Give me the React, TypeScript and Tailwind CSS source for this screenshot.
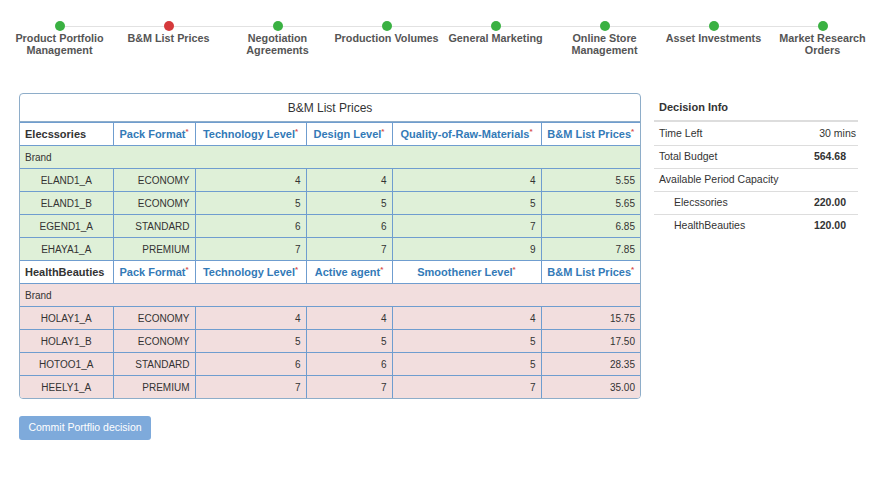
import React, { FC } from "react";

const steps = [
  { label: ["Product Portfolio", "Management"], active: false },
  { label: ["B&M List Prices"], active: true },
  { label: ["Negotiation", "Agreements"], active: false },
  { label: ["Production Volumes"], active: false },
  { label: ["General Marketing"], active: false },
  { label: ["Online Store", "Management"], active: false },
  { label: ["Asset Investments"], active: false },
  { label: ["Market Research", "Orders"], active: false },
];

type Row = { brand: string; pack: string; a: number; b: number; c: number; price: string };

const groups: { name: string; cols: string[]; tone: "green" | "red"; rows: Row[] }[] = [
  {
    name: "Elecssories",
    cols: ["Pack Format", "Technology Level", "Design Level", "Quality-of-Raw-Materials", "B&M List Prices"],
    tone: "green",
    rows: [
      { brand: "ELAND1_A", pack: "ECONOMY", a: 4, b: 4, c: 4, price: "5.55" },
      { brand: "ELAND1_B", pack: "ECONOMY", a: 5, b: 5, c: 5, price: "5.65" },
      { brand: "EGEND1_A", pack: "STANDARD", a: 6, b: 6, c: 7, price: "6.85" },
      { brand: "EHAYA1_A", pack: "PREMIUM", a: 7, b: 7, c: 9, price: "7.85" },
    ],
  },
  {
    name: "HealthBeauties",
    cols: ["Pack Format", "Technology Level", "Active agent", "Smoothener Level", "B&M List Prices"],
    tone: "red",
    rows: [
      { brand: "HOLAY1_A", pack: "ECONOMY", a: 4, b: 4, c: 4, price: "15.75" },
      { brand: "HOLAY1_B", pack: "ECONOMY", a: 5, b: 5, c: 5, price: "17.50" },
      { brand: "HOTOO1_A", pack: "STANDARD", a: 6, b: 6, c: 5, price: "28.35" },
      { brand: "HEELY1_A", pack: "PREMIUM", a: 7, b: 7, c: 7, price: "35.00" },
    ],
  },
];

const cell = "border border-[#6f9dcf] h-[23px] px-[5px] text-[10px] text-[#333]";

const Steps: FC = () => (
  <div className="flex px-[5px] pt-[21px]">
    {steps.map((s, i) => (
      <div key={i} className="w-[109px] flex flex-col items-center">
        <div className="flex items-center w-full">
          <div className={`flex-1 h-px ${i === 0 ? "" : "bg-[#e2e2e2]"}`} />
          <div className={`w-[10px] h-[10px] rounded-full ${s.active ? "bg-[#d5393b]" : "bg-[#3ab142]"}`} />
          <div className={`flex-1 h-px ${i === steps.length - 1 ? "" : "bg-[#e2e2e2]"}`} />
        </div>
        <div className="mt-[1px] text-center text-[10.8px] leading-[12px] font-bold text-[#555]">
          {s.label.map((l) => (
            <div key={l} className="whitespace-nowrap">{l}</div>
          ))}
        </div>
      </div>
    ))}
  </div>
);

const PriceTable: FC = () => (
  <div className="w-[622px] border border-[#8eadc9] rounded-[4px] overflow-hidden">
    <div className="h-[28px] flex items-center justify-center text-[12px] text-[#333] border-b border-[#8eadc9]">
      B&amp;M List Prices
    </div>
    <table className="w-full border-collapse table-fixed -mb-px">
      <colgroup>
        <col className="w-[93px]" />
        <col className="w-[82px]" />
        <col className="w-[111px]" />
        <col className="w-[86px]" />
        <col className="w-[149px]" />
        <col />
      </colgroup>
      <tbody>
        {groups.map((g) => {
          const bg = g.tone === "green" ? "bg-[#dff0d8]" : "bg-[#f2dede]";
          return (
            <React.Fragment key={g.name}>
              <tr className="bg-white">
                <th className={`${cell} border-l-0 text-left text-[11px] font-bold text-[#111]`}>{g.name}</th>
                {g.cols.map((c, j) => (
                  <th
                    key={c}
                    className={`${cell} ${j === g.cols.length - 1 ? "border-r-0" : ""} text-center text-[11px] font-bold !text-[#337ab7] whitespace-nowrap`}
                  >
                    {c}
                    <span className="text-[#d9534f] text-[8px] align-top">*</span>
                  </th>
                ))}
              </tr>
              <tr className={bg}>
                <td colSpan={6} className={`${cell} border-x-0 text-left`}>Brand</td>
              </tr>
              {g.rows.map((r) => (
                <tr key={r.brand} className={bg}>
                  <td className={`${cell} border-l-0 text-center`}>{r.brand}</td>
                  <td className={`${cell} text-right`}>{r.pack}</td>
                  <td className={`${cell} text-right`}>{r.a}</td>
                  <td className={`${cell} text-right`}>{r.b}</td>
                  <td className={`${cell} text-right`}>{r.c}</td>
                  <td className={`${cell} border-r-0 text-right`}>{r.price}</td>
                </tr>
              ))}
            </React.Fragment>
          );
        })}
      </tbody>
    </table>
  </div>
);

const DecisionInfo: FC = () => {
  const rows = [
    { k: "Time Left", v: "30 mins", bold: false, indent: false },
    { k: "Total Budget", v: "564.68", bold: true, indent: false },
    { k: "Available Period Capacity", v: "", bold: false, indent: false },
    { k: "Elecssories", v: "220.00", bold: true, indent: true },
    { k: "HealthBeauties", v: "120.00", bold: true, indent: true },
  ];
  return (
    <div className="w-[204px] text-[10.5px] text-[#333]">
      <div className="h-[29px] flex items-center pt-[1px] px-[5px] font-bold text-[11px] border-b-2 border-[#ddd]">
        Decision Info
      </div>
      {rows.map((r, i) => (
        <div
          key={r.k}
          className={`h-[23px] flex items-center justify-between ${i > 0 ? "border-t border-[#ddd]" : ""} ${r.indent ? "pl-[20px]" : "pl-[5px]"} ${r.bold ? "pr-[12px]" : "pr-[2px]"}`}
        >
          <span>{r.k}</span>
          <span className={r.bold ? "font-bold" : ""}>{r.v}</span>
        </div>
      ))}
    </div>
  );
};

export default function App() {
  return (
    <div className="w-[882px] h-[487px] bg-white" style={{ fontFamily: '"Liberation Sans", Arial, sans-serif' }}>
      <Steps />
      <div className="flex items-start gap-[13px] pl-[19px] mt-[37px]">
        <PriceTable />
        <DecisionInfo />
      </div>
      <div className="pl-[19px] mt-[15px]">
        <button className="h-[24px] w-[132px] rounded-[3px] bg-[#7eaadb] text-white text-[10.5px]">
          Commit Portflio decision
        </button>
      </div>
    </div>
  );
}
